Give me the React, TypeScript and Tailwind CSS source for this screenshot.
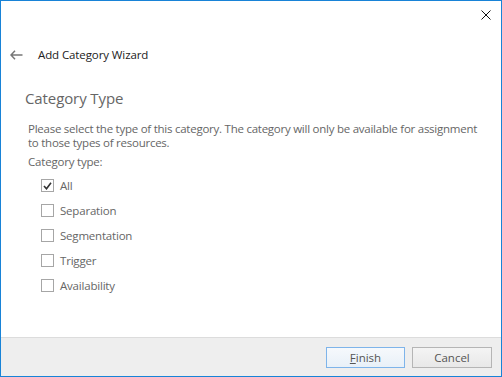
export default function App() {
  const types = [
    { label: "All", checked: true },
    { label: "Separation", checked: false },
    { label: "Segmentation", checked: false },
    { label: "Trigger", checked: false },
    { label: "Availability", checked: false },
  ];

  return (
    <div className="flex h-[377px] w-[502px] flex-col border border-[#1883d7] bg-white font-['Open_Sans',sans-serif] text-[#666]">
      <div className="flex h-[30px] justify-end pr-[10px] pt-[9px]">
        <svg width="10" height="10" viewBox="0 0 10 10" className="text-[#111]">
          <path d="M0.5 0.5 L9.5 9.5 M9.5 0.5 L0.5 9.5" stroke="currentColor" strokeWidth="1" />
        </svg>
      </div>

      <div className="flex h-[48px] items-center pl-[9px]">
        <svg width="13" height="10" viewBox="0 0 13 10" className="text-[#777]">
          <path d="M5 0.8 L1 5 L5 9.2 M1 5 H12.5" stroke="currentColor" strokeWidth="1.5" fill="none" />
        </svg>
        <span className="ml-[15px] text-[11.5px] tracking-[-0.1px] text-[#222]">Add Category Wizard</span>
      </div>

      <div className="flex flex-1 flex-col pl-[24px] pr-[10px]">
        <h1 className="mt-[9px] text-[15px] leading-[20px] tracking-[-0.1px] text-[#666]">Category Type</h1>
        <p className="mt-[14px] pl-[3px] text-[11.5px] leading-[14px] tracking-[-0.25px]">
          Please select the type of this category. The category will only be available for assignment
          <br />
          to those types of resources.
        </p>
        <div className="mt-[5px] pl-[3px] text-[11.5px] leading-[14px] tracking-[-0.2px]">Category type:</div>
        <ul className="mt-[10px] flex flex-col gap-[12px] pl-[16px]">
          {types.map((t) => (
            <li key={t.label} className="flex h-[13px] items-center">
              <span className="flex h-[13px] w-[13px] items-center justify-center border border-[#a6a6a6] bg-white">
                {t.checked && (
                  <svg width="9" height="8" viewBox="0 0 9 8">
                    <path d="M1 4 L3.5 6.8 L8 0.8" stroke="#333" strokeWidth="1.6" fill="none" />
                  </svg>
                )}
              </span>
              <span className="ml-[6px] text-[11.5px] leading-[13px] tracking-[-0.2px]">{t.label}</span>
            </li>
          ))}
        </ul>
      </div>

      <div className="flex h-[39px] items-center justify-end gap-[7px] border-t border-[#dcdcdc] bg-[#eeeeee] pr-[9px] pt-[1px]">
        <button className="h-[21px] w-[79px] border border-[#7eb4ea] bg-gradient-to-b from-[#f6f9fc] to-[#e8f0f8] text-[11.5px] text-[#555]">
          <span className="underline">F</span>inish
        </button>
        <button className="h-[21px] w-[80px] border border-[#b5b5b5] bg-gradient-to-b from-[#f4f4f4] to-[#e8e8e8] text-[11.5px] text-[#555]">
          Cancel
        </button>
      </div>
    </div>
  );
}
